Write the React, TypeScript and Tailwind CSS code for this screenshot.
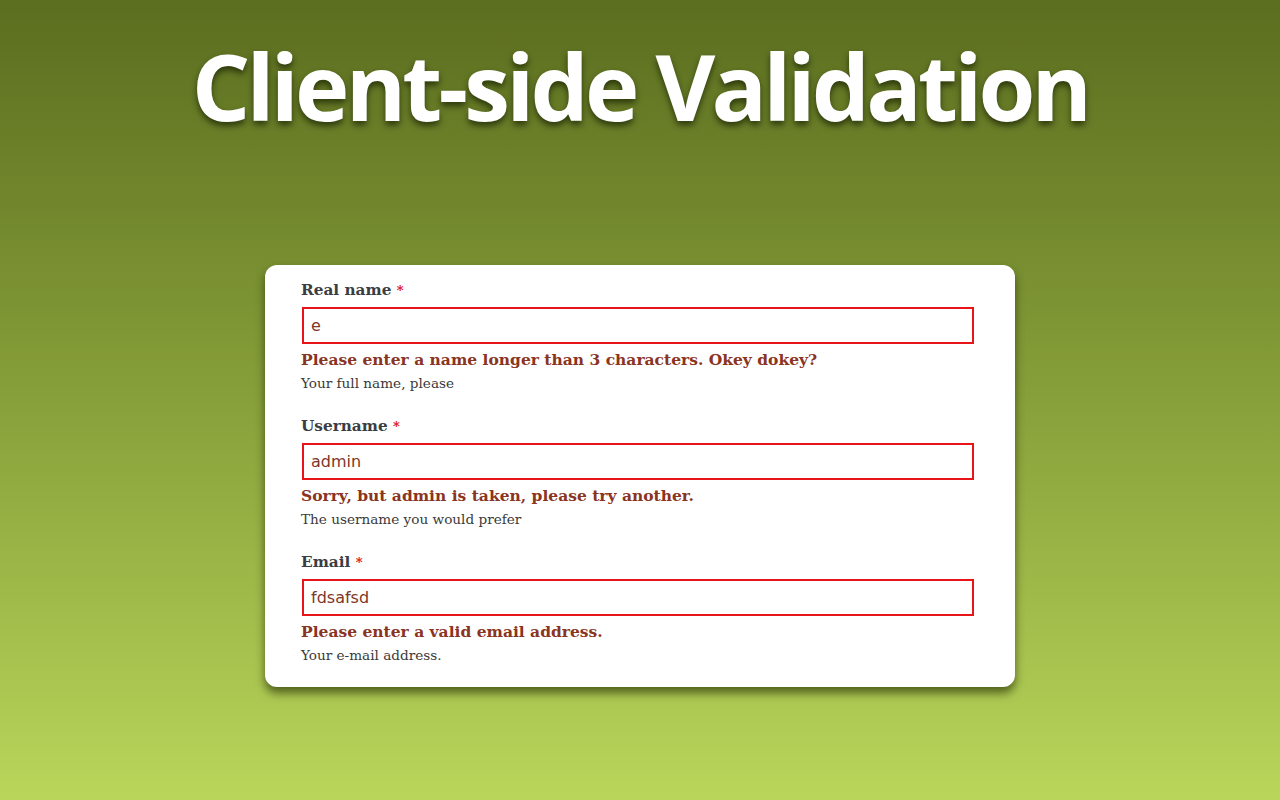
import React from "react";

type Field = {
  label: string;
  value: string;
  error: string;
  help: string;
};

const fields: Field[] = [
  {
    label: "Real name",
    value: "e",
    error: "Please enter a name longer than 3 characters. Okey dokey?",
    help: "Your full name, please",
  },
  {
    label: "Username",
    value: "admin",
    error: "Sorry, but admin is taken, please try another.",
    help: "The username you would prefer",
  },
  {
    label: "Email",
    value: "fdsafsd",
    error: "Please enter a valid email address.",
    help: "Your e-mail address.",
  },
];

function FormField({ field }: { field: Field }) {
  return (
    <div className="flex flex-col">
      <label className="text-[15.3px] font-bold leading-[22px] text-[#3a3d42]">
        {field.label} <span className="text-[13px] text-[#e01010]">*</span>
      </label>
      <input
        readOnly
        value={field.value}
        className="mt-[5px] ml-[1px] h-[37px] w-[672px] border-2 border-[#e8141a] bg-white px-[7px] font-['DejaVu_Sans',sans-serif] text-[16px] text-[#7e3626] outline-none"
      />
      <p className="mt-[5px] text-[15.5px] font-bold leading-[22px] text-[#8a3422]">
        {field.error}
      </p>
      <p className="mt-[2px] text-[13.6px] leading-[20px] text-[#3a3a3a]">{field.help}</p>
    </div>
  );
}

export default function App() {
  return (
    <div className="flex h-[800px] w-full flex-col items-center bg-gradient-to-b from-[#5b6d1f] via-[#88a03a] to-[#bad65a]">
      <h1
        className="mt-[31px] font-['Open_Sans',sans-serif] text-[92px] font-bold leading-[110px] tracking-[-3.8px] text-white [text-shadow:0_4px_6px_rgba(20,30,0,0.7)]"
      >
        Client-side Validation
      </h1>
      <div className="mt-[124px] w-[750px] rounded-[12px] bg-white pb-[22px] pl-[36px] pt-[14px] shadow-[0_6px_10px_rgba(30,40,0,0.65)] font-['DejaVu_Serif',serif]">
        <div className="flex flex-col gap-[22px]">
          {fields.map((f) => (
            <FormField key={f.label} field={f} />
          ))}
        </div>
      </div>
    </div>
  );
}
